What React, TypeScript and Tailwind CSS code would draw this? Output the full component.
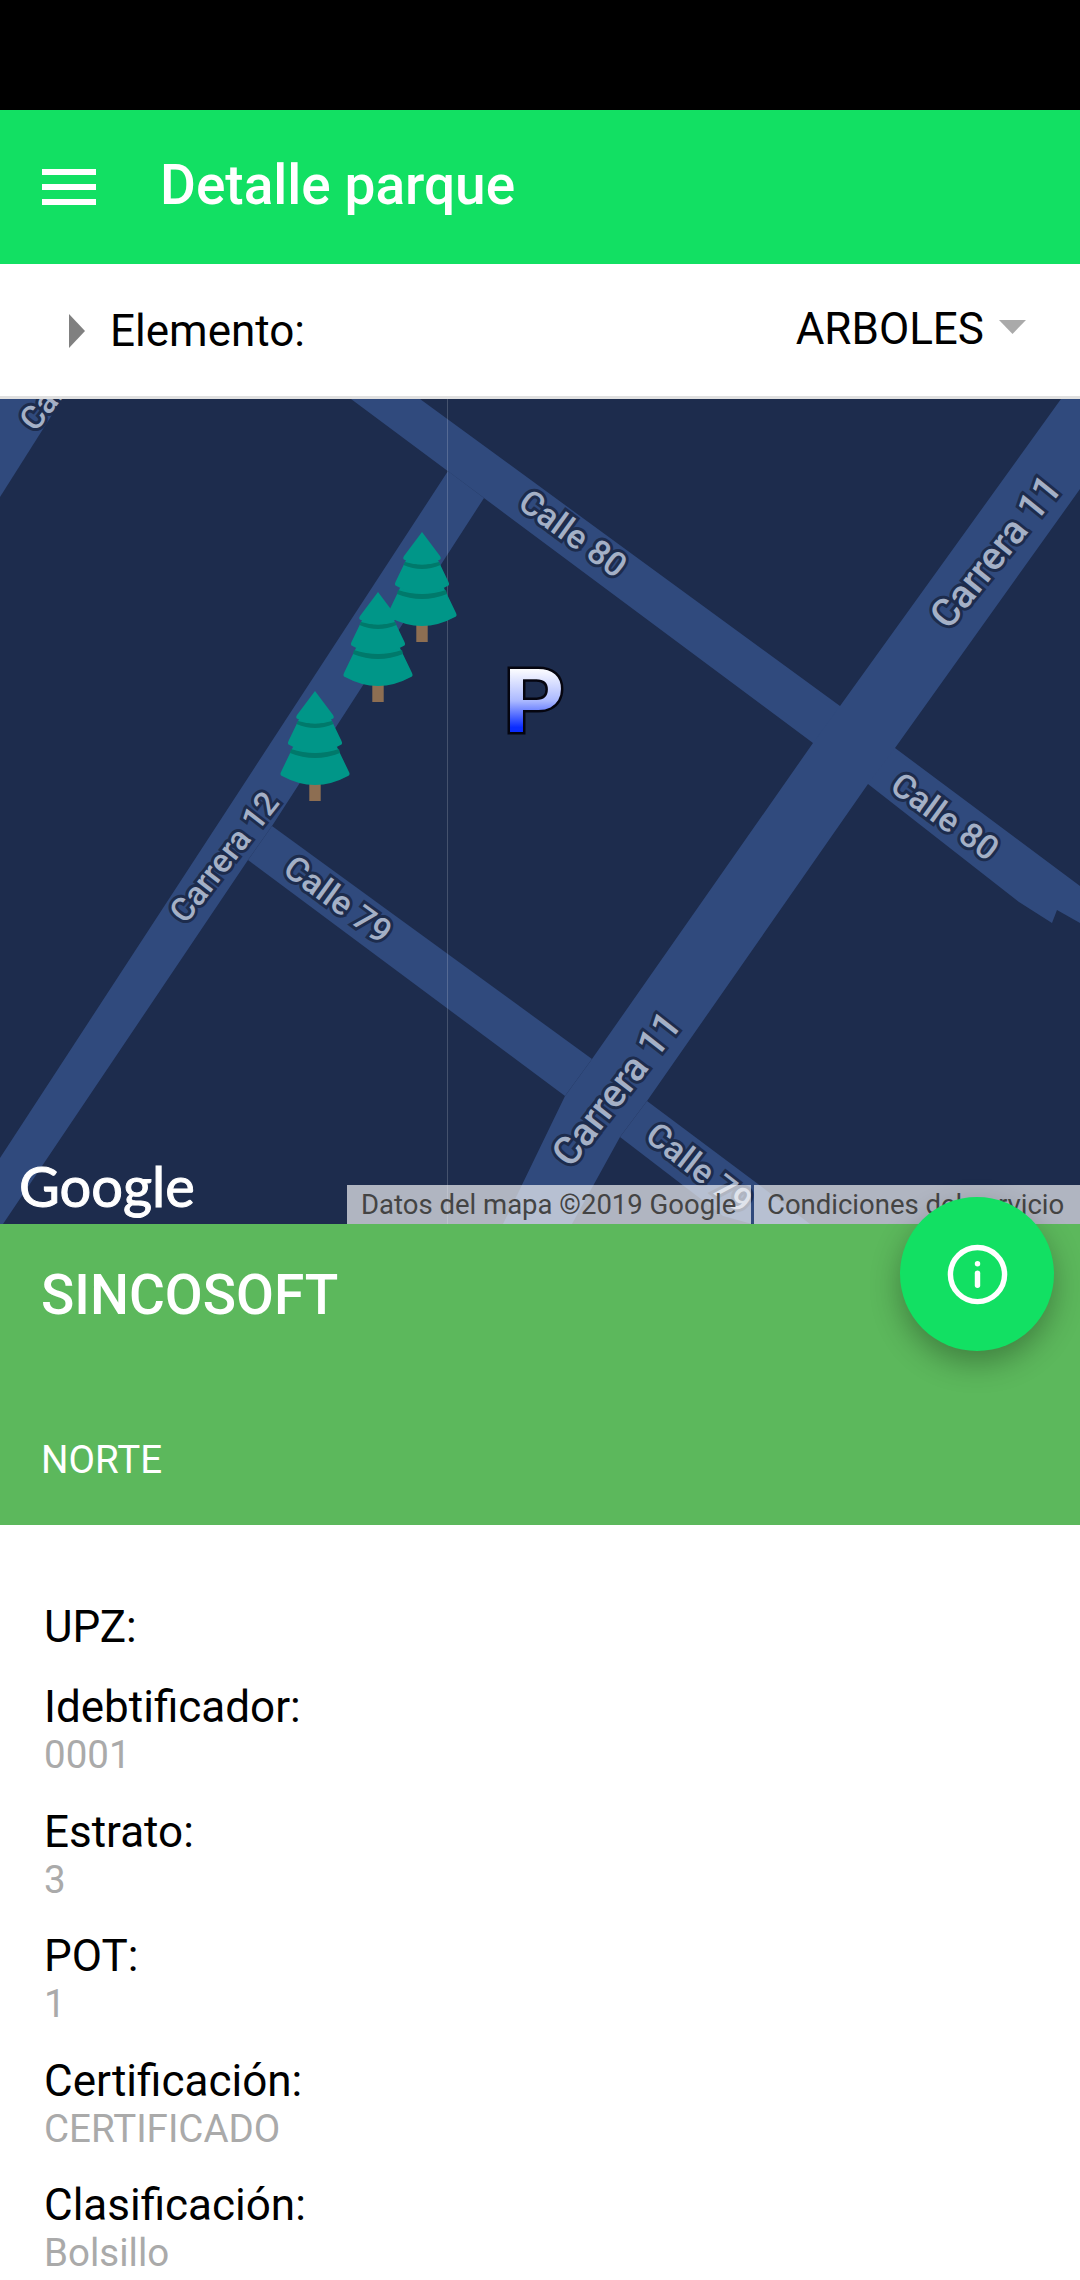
const TREES = [
  { x: 422, y: 532 },
  { x: 378, y: 592 },
  { x: 315, y: 691 },
];

const ROADS = [
  "351,399 420,399 840,706 895,748 1080,886 1080,923 1057,910 1052,923 1019,902 868,784 813,743",
  "840,706 1061,399 1080,399 1080,489 895,748 868,784 647,1101 620,1137 572,1224 503,1224 565,1096 592,1059 813,743",
  "448,471 484,498 272,826 248,860 3,1224 0,1224 0,1158",
  "272,826 592,1059 565,1096 248,860",
  "647,1101 758,1184 810,1224 752,1224 723,1216 620,1137",
  "0,399 62,399 0,497",
];

const LABELS = [
  { text: "Calle 80", x: 566, y: 543, angle: 36, size: 34 },
  { text: "Calle 80", x: 938, y: 826, angle: 36, size: 34 },
  { text: "Carrera 11", x: 1006, y: 560, angle: -51, size: 39 },
  { text: "Carrera 12", x: 233, y: 864, angle: -52, size: 33 },
  { text: "Calle 79", x: 331, y: 909, angle: 36, size: 34 },
  { text: "Carrera 11", x: 627, y: 1097, angle: -52, size: 39 },
  { text: "Calle 79", x: 692, y: 1177, angle: 38, size: 34 },
  { text: "Carrera 12", x: 83, y: 372, angle: -52, size: 33 },
];

function Tree({ x, y }: { x: number; y: number }) {
  return (
    <g transform={`translate(${x} ${y})`}>
      <rect x="-5.7" y="92" width="11.4" height="18" fill="#8d6e52" />
      <path d="M-22 56 L22 56 L34 81 Q35.5 84 33 85 Q0 103 -33 85 Q-35.5 84 -34 81 Z" fill="#009688" />
      <path d="M-24 58 Q0 66 24 58 L25 62 Q0 72 -25 62 Z" fill="#00796b" />
      <path d="M-15 26 L15 26 L26.5 50 Q28 53 25.5 54 Q0 69 -25.5 54 Q-28 53 -26.5 50 Z" fill="#009688" />
      <path d="M-17 30 Q0 35 17 30 L18.5 33 Q0 41 -18.5 33 Z" fill="#00796b" />
      <path d="M0 0 L18 24 Q20 27 17 28 Q0 37 -17 28 Q-20 27 -18 24 Z" fill="#009688" />
    </g>
  );
}

function MapView() {
  return (
    <svg viewBox="0 399 1080 825" className="block h-full w-full">
      <defs>
        <linearGradient id="pin" gradientUnits="userSpaceOnUse" x1="0" y1="668" x2="0" y2="734">
          <stop offset="0" stopColor="#ffffff" />
          <stop offset="0.5" stopColor="#aab8ff" />
          <stop offset="0.9" stopColor="#0a2cff" />
        </linearGradient>
      </defs>
      <rect x="0" y="399" width="1080" height="825" fill="#1d2c4d" />
      {ROADS.map((points) => (
        <polygon key={points} points={points} fill="#304a7d" />
      ))}
      <line x1="447.5" y1="399" x2="447.5" y2="1224" stroke="#ffffff" strokeOpacity="0.18" />
      {LABELS.map((l) => (
        <text
          key={`${l.text}${l.x}`}
          x={l.x}
          y={l.y}
          transform={`rotate(${l.angle} ${l.x} ${l.y})`}
          textAnchor="middle"
          fontFamily="Roboto, sans-serif"
          fontWeight="500"
          fontSize={l.size}
          fill="#a4b0c6"
          stroke="#1d2c4d"
          strokeWidth="6"
          paintOrder="stroke"
        >
          {l.text}
        </text>
      ))}
      {TREES.map((t) => (
        <Tree key={t.x} x={t.x} y={t.y} />
      ))}
      <text
        x="504"
        y="732"
        fontFamily="Liberation Sans, sans-serif"
        fontWeight="700"
        fontSize="90"
        fill="url(#pin)"
        stroke="#05050f"
        strokeWidth="5"
        paintOrder="stroke"
      >
        P
      </text>
    </svg>
  );
}

function Field({ label, value }: { label: string; value?: string }) {
  return (
    <div className={value ? "mb-[29.5px]" : "mb-[28.5px]"}>
      <div className="text-[44px] leading-[52px] text-black">{label}</div>
      {value && <div className="text-[38.5px] leading-[43px] text-[#aaaaaa]">{value}</div>}
    </div>
  );
}

export default function App() {
  return (
    <div className="relative h-[2280px] w-[1080px] overflow-hidden bg-white font-['Roboto',sans-serif]">
      <div className="h-[110px] bg-black" />
      <header className="flex h-[154px] items-center bg-[#12e063] pl-[42px]">
        <div className="flex h-[36px] w-[54px] flex-col justify-between">
          <span className="h-[6px] bg-white" />
          <span className="h-[6px] bg-white" />
          <span className="h-[6px] bg-white" />
        </div>
        <h1 className="mb-[3px] ml-[64px] text-[55px] font-medium text-white">Detalle parque</h1>
      </header>

      <div className="flex h-[135px] items-center border-b-[3px] border-[#e0e0e0] pl-[69px] pr-[54px]">
        <svg width="16" height="34" viewBox="0 0 16 34" className="mt-[2px]">
          <polygon points="0,0 16,17 0,34" fill="#808080" />
        </svg>
        <span className="ml-[25px] mt-[1px] text-[44px] text-black">Elemento:</span>
        <span className="mb-[2px] ml-auto text-[44px] text-black">ARBOLES</span>
        <svg width="27" height="14" viewBox="0 0 27 14" className="mb-[6px] ml-[15px]">
          <polygon points="0,0 27,0 13.5,14" fill="#aaaaaa" />
        </svg>
      </div>

      <div className="relative h-[825px]">
        <MapView />
        <div className="absolute bottom-0 left-[347px] right-0 flex h-[39px] text-[27.5px] leading-[39px] text-[#444444]">
          <div className="w-[404px] whitespace-nowrap bg-white/65 pl-[14px]">Datos del mapa ©2019 Google</div>
          <div className="ml-[3px] flex-1 whitespace-nowrap bg-white/65 pl-[13px]">Condiciones del servicio</div>
        </div>
        <div className="absolute bottom-[8px] left-[19px] font-['Lato',sans-serif] text-[56px] font-normal leading-[60px] text-white [-webkit-text-stroke:1px_white]">
          Google
        </div>
      </div>

      <section className="h-[301px] bg-[#5cb85c] pl-[41px] pt-[41px] text-white">
        <div className="text-[55px] font-medium leading-[60px]">SINCOSOFT</div>
        <div className="mt-[114px] text-[38.5px] leading-[42px]">NORTE</div>
      </section>

      <button className="absolute left-[900px] top-[1197px] flex h-[154px] w-[154px] items-center justify-center rounded-full bg-[#12e063] shadow-[0_12px_30px_rgba(0,0,0,0.3)]">
        <svg width="65" height="65" viewBox="0 0 24 24" fill="none" stroke="#ffffff" strokeWidth="2" strokeLinecap="round">
          <circle cx="12" cy="12" r="10" />
          <path d="M12 16v-4.5" />
          <path d="M12 8h.01" />
        </svg>
      </button>

      <div className="pl-[44px] pt-[75.5px]">
        <Field label="UPZ:" />
        <Field label="Idebtificador:" value="0001" />
        <Field label="Estrato:" value="3" />
        <Field label="POT:" value="1" />
        <Field label="Certificación:" value="CERTIFICADO" />
        <Field label="Clasificación:" value="Bolsillo" />
      </div>
    </div>
  );
}
